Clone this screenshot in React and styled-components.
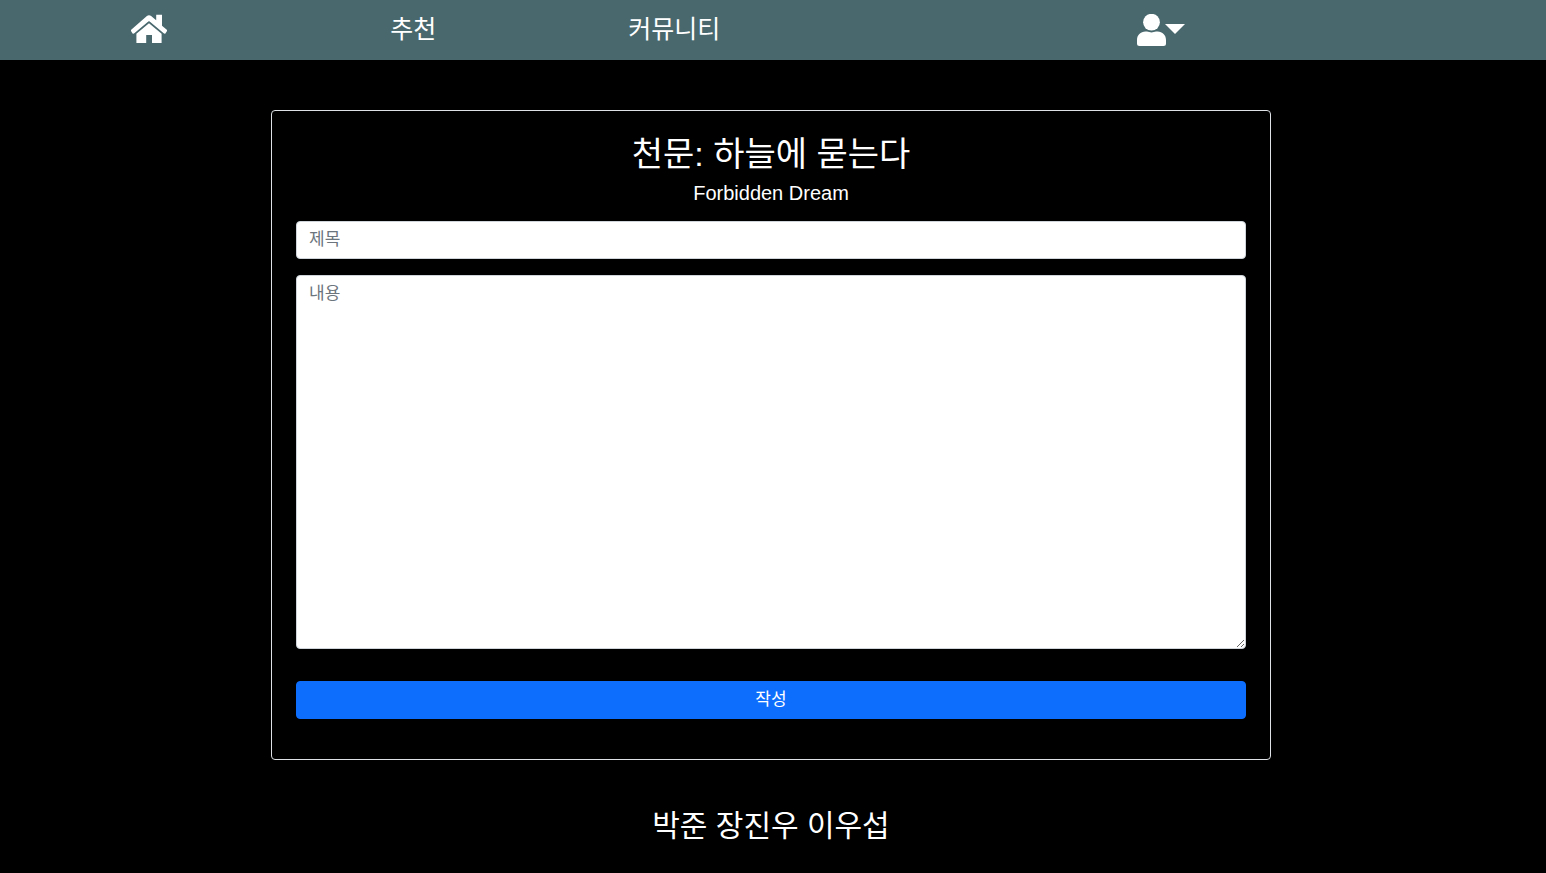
import React from "react";
import styled, { createGlobalStyle } from "styled-components";

const GlobalStyle = createGlobalStyle`
  *, *::before, *::after { box-sizing: border-box; }
  body {
    margin: 0;
    background: #000;
    color: #fff;
    font-family: "Liberation Sans", "Noto Sans CJK KR", sans-serif;
    font-size: 17px;
    line-height: 26px;
  }
`;

const NavBar = styled.nav`
  display: grid;
  grid-template-columns: 259fr 238fr 509fr 409fr;
  align-items: center;
  justify-items: start;
  height: 60px;
  padding-left: 8.5%;
  padding-bottom: 2px;
  background: #48686e;
`;

const NavLink = styled.a`
  display: flex;
  color: #fff;
  font-size: 25px;
  line-height: 36px;
  text-decoration: none;
`;

const UserButton = styled.button`
  display: flex;
  align-items: center;
  padding: 2px 0 0;
  border: 0;
  background: none;
  color: #fff;
  cursor: pointer;
`;

const Caret = styled.span`
  margin: 0 0 2px -2px;
  border-top: 10px solid currentColor;
  border-left: 10px solid transparent;
  border-right: 10px solid transparent;
`;

const Page = styled.div`
  display: flex;
  flex-direction: column;
  align-items: center;
  padding: 50px 20px 24px 16px;
`;

const Card = styled.main`
  width: 100%;
  max-width: 1000px;
  padding: 24px 24px 40px;
  border: 1px solid #dee2e6;
  border-radius: 4px;
`;

const Title = styled.h1`
  margin: 0 0 8px;
  font-size: 34px;
  font-weight: 400;
  line-height: 38px;
  text-align: center;
`;

const Subtitle = styled.h2`
  margin: 0 0 16px;
  font-size: 20px;
  font-weight: 400;
  line-height: 24px;
  text-align: center;
`;

const Form = styled.form`
  display: flex;
  flex-direction: column;
`;

const TextField = styled.input`
  width: 100%;
  height: 38px;
  margin-bottom: 16px;
  padding: 5px 12px;
  border: 1px solid #ced4da;
  border-radius: 4px;
  background: #fff;
  color: #212529;
  font: inherit;
  &::placeholder { color: #6c757d; opacity: 1; }
`;

const TextBox = styled(TextField)`
  height: 374px;
  margin-bottom: 32px;
  resize: vertical;
`;

const SubmitButton = styled.button`
  height: 38px;
  padding: 5px 12px;
  border: 1px solid #0d6efd;
  border-radius: 4px;
  background: #0d6efd;
  color: #fff;
  font: inherit;
  cursor: pointer;
`;

const Footer = styled.footer`
  margin-top: 44px;
  font-size: 30px;
  line-height: 44px;
  text-align: center;
`;

const HomeIcon = () => (
  <svg width="36" height="32" viewBox="0 0 36 32" fill="currentColor" aria-hidden="true">
    <path d="M25.2 1.8H31V12.8L35.8 16.8Q36.4 17.7 35.7 18.6L34.4 20.4Q33.6 21 32.7 20.3L18.7 8.6Q18 8.1 17.3 8.6L3.3 20.3Q2.4 21 1.6 20.4L.3 18.6Q-.4 17.7 .2 16.8L15.9 3Q18 1.3 20.1 3L25.2 7.2Z" />
    <path d="M18 10.2L30.6 20.7V30H21V22H15.2V30H5.4V20.7Z" />
  </svg>
);

const UserIcon = () => (
  <svg width="30" height="32" viewBox="0 0 30 32" fill="currentColor" aria-hidden="true">
    <circle cx="14.5" cy="8.2" r="8.4" />
    <path d="M8.5 17.6H10C13 18.7 16 18.7 19 17.6H20.5C25.5 17.6 29 21.2 29 26V29.5Q29 32 26.5 32H2.5Q0 32 0 29.5V26C0 21.2 3.5 17.6 8.5 17.6Z" />
  </svg>
);

export default function App() {
  return (
    <>
      <GlobalStyle />
      <NavBar>
        <NavLink href="#home" aria-label="홈"><HomeIcon /></NavLink>
        <NavLink href="#recommend">추천</NavLink>
        <NavLink href="#community">커뮤니티</NavLink>
        <UserButton type="button" aria-label="사용자 메뉴">
          <UserIcon />
          <Caret />
        </UserButton>
      </NavBar>
      <Page>
        <Card>
          <Title>천문: 하늘에 묻는다</Title>
          <Subtitle>Forbidden Dream</Subtitle>
          <Form onSubmit={(event) => event.preventDefault()}>
            <TextField type="text" aria-label="제목" placeholder="제목" />
            <TextBox as="textarea" aria-label="내용" placeholder="내용" />
            <SubmitButton type="submit">작성</SubmitButton>
          </Form>
        </Card>
        <Footer>박준 장진우 이우섭</Footer>
      </Page>
    </>
  );
}
